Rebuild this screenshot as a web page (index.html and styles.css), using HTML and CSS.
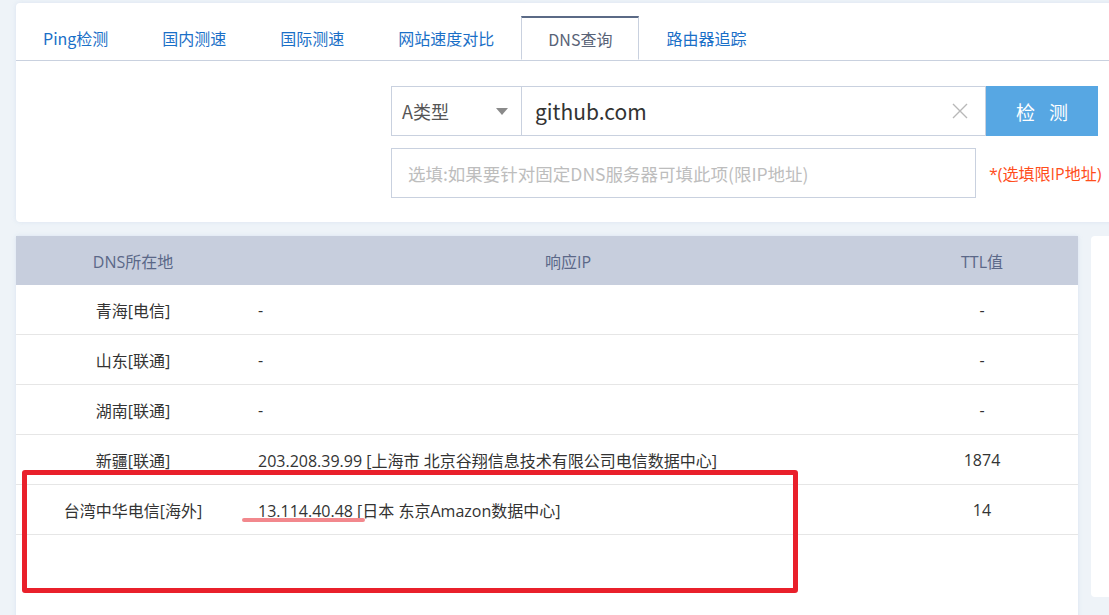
FILE: index.html
```html
<!DOCTYPE html>
<html lang="zh-CN">
<head>
  <meta charset="UTF-8">
  <title>DNS查询</title>
  <link rel="stylesheet" href="styles.css">
</head>
<body>

<div class="page">
  <div class="search-card">
    <ul class="tabs">
      <li class="tab">Ping检测</li>
      <li class="tab">国内测速</li>
      <li class="tab">国际测速</li>
      <li class="tab">网站速度对比</li>
      <li class="tab active">DNS查询</li>
      <li class="tab">路由器追踪</li>
    </ul>

    <div class="query">
      <div class="query-row">
        <div class="type-select">
          <span>A类型</span>
          <span class="caret"></span>
        </div>
        <div class="domain-input">
          <span>github.com</span>
          <svg class="clear" width="16" height="16" viewBox="0 0 16 16">
            <path d="M1 1 L15 15 M15 1 L1 15" stroke="#b8b8b8" stroke-width="1.4" fill="none"/>
          </svg>
        </div>
        <button class="check-btn">检测</button>
      </div>
      <div class="query-row">
        <div class="dns-input">选填:如果要针对固定DNS服务器可填此项(限IP地址)</div>
        <span class="hint">*(选填限IP地址)</span>
      </div>
    </div>
  </div>

  <div class="results">
    <div class="result-card">
      <table>
        <thead>
        <tr>
          <th class="col-loc">DNS所在地</th>
          <th class="col-ip">响应IP</th>
          <th class="col-ttl">TTL值</th>
        </tr>
        </thead>
        <tbody>
        <tr><td class="loc">青海[电信]</td><td class="ip">-</td><td class="ttl">-</td></tr>
        <tr><td class="loc">山东[联通]</td><td class="ip">-</td><td class="ttl">-</td></tr>
        <tr><td class="loc">湖南[联通]</td><td class="ip">-</td><td class="ttl">-</td></tr>
        <tr><td class="loc">新疆[联通]</td><td class="ip">203.208.39.99 [上海市 北京谷翔信息技术有限公司电信数据中心]</td><td class="ttl">1874</td></tr>
        <tr><td class="loc">台湾中华电信[海外]</td><td class="ip">13.114.40.48 [日本 东京Amazon数据中心]</td><td class="ttl">14</td></tr>
        </tbody>
      </table>

      <div class="mark-box"></div>
      <div class="mark-line"></div>
    </div>
    <div class="side-card"></div>
  </div>
</div>

</body>
</html>
```

FILE: styles.css
```css
html, body {
  margin: 0;
  padding: 0;
  overflow: hidden;
}

body {
  font-family: "Open Sans", "Noto Sans CJK SC", sans-serif;
  background-color: #eef3f8;
  color: #333;
  height: 615px;
}

.page {
  padding: 3px 0 0 16px;
}

.search-card {
  width: 1110px;
  background-color: #fff;
  border-radius: 4px;
  padding: 13px 0 24px 0;
  box-shadow: 0 0 4px rgba(180, 200, 225, 0.35);
}

.tabs {
  list-style: none;
  margin: 0;
  padding: 0;
  display: flex;
  height: 44px;
  border-bottom: 1px solid #c9d1df;
}

.tab {
  padding: 0 27px;
  line-height: 44px;
  font-family: "Noto Sans CJK SC", sans-serif;
  font-size: 16px;
  color: #1a6fc7;
}

.tab.active {
  padding: 0 26px;
  line-height: 42px;
  background-color: #fff;
  color: #596377;
  border: 1px solid #c9d1df;
  border-top: 2px solid #5b6a86;
  border-bottom: 1px solid #fff;
}

.query {
  margin-left: 375px;
  padding-top: 25px;
  display: flex;
  flex-direction: column;
  gap: 12px;
}

.query-row {
  display: flex;
  align-items: center;
  height: 50px;
}

.type-select {
  box-sizing: border-box;
  width: 131px;
  height: 50px;
  border: 1px solid #c9d1df;
  display: flex;
  align-items: center;
  justify-content: space-between;
  padding: 0 13px 0 10px;
  font-family: "Noto Sans CJK SC", sans-serif;
  font-size: 18px;
  color: #555;
}

.caret {
  width: 0;
  height: 0;
  border-left: 6px solid transparent;
  border-right: 6px solid transparent;
  border-top: 7px solid #8a8a8a;
}

.domain-input {
  box-sizing: border-box;
  width: 464px;
  height: 50px;
  border: 1px solid #c9d1df;
  border-left: none;
  display: flex;
  align-items: center;
  justify-content: space-between;
  padding: 0 17px 0 13px;
  font-family: "Noto Sans CJK SC", sans-serif;
  font-size: 21px;
  color: #333;
}

.check-btn {
  width: 112px;
  height: 50px;
  border: none;
  background-color: #57a7e3;
  color: #fff;
  font-family: "Noto Sans CJK SC", sans-serif;
  font-size: 19px;
  letter-spacing: 14px;
  padding: 0 0 0 14px;
}

.dns-input {
  box-sizing: border-box;
  width: 585px;
  height: 50px;
  border: 1px solid #c9d1df;
  display: flex;
  align-items: center;
  padding-left: 16px;
  font-family: "Noto Sans CJK SC", sans-serif;
  font-size: 17.5px;
  color: #bdbdbd;
}

.hint {
  margin-left: 13px;
  font-size: 16px;
  color: #ff4e1c;
}

.results {
  display: flex;
  margin-top: 14px;
}

.result-card {
  position: relative;
  flex-shrink: 0;
  width: 1062px;
  height: 400px;
  background-color: #fff;
  box-shadow: 0 0 4px rgba(180, 200, 225, 0.35);
}

.side-card {
  flex-shrink: 0;
  width: 40px;
  height: 361px;
  margin-left: 13px;
  background-color: #fff;
  border-radius: 4px;
}

table {
  width: 100%;
  border-collapse: collapse;
}

th {
  height: 49px;
  padding: 0;
  background-color: #c7cedd;
  color: #5b6888;
  font-weight: normal;
  font-size: 16px;
}

.col-loc {
  width: 234px;
}

.col-ttl {
  width: 192px;
}

td {
  height: 49px;
  padding: 0;
  border-bottom: 1px solid #e6e6e6;
  font-size: 16px;
  color: #333;
}

td.loc, td.ttl {
  text-align: center;
}

td.ip {
  padding-left: 8px;
}

.mark-box {
  position: absolute;
  left: 6px;
  top: 234px;
  width: 766px;
  height: 113px;
  border: 5px solid #e9202b;
  border-radius: 3px;
}

.mark-line {
  position: absolute;
  left: 226px;
  top: 282px;
  width: 123px;
  height: 4px;
  border-radius: 2px;
  background-color: #f2888d;
}
```
